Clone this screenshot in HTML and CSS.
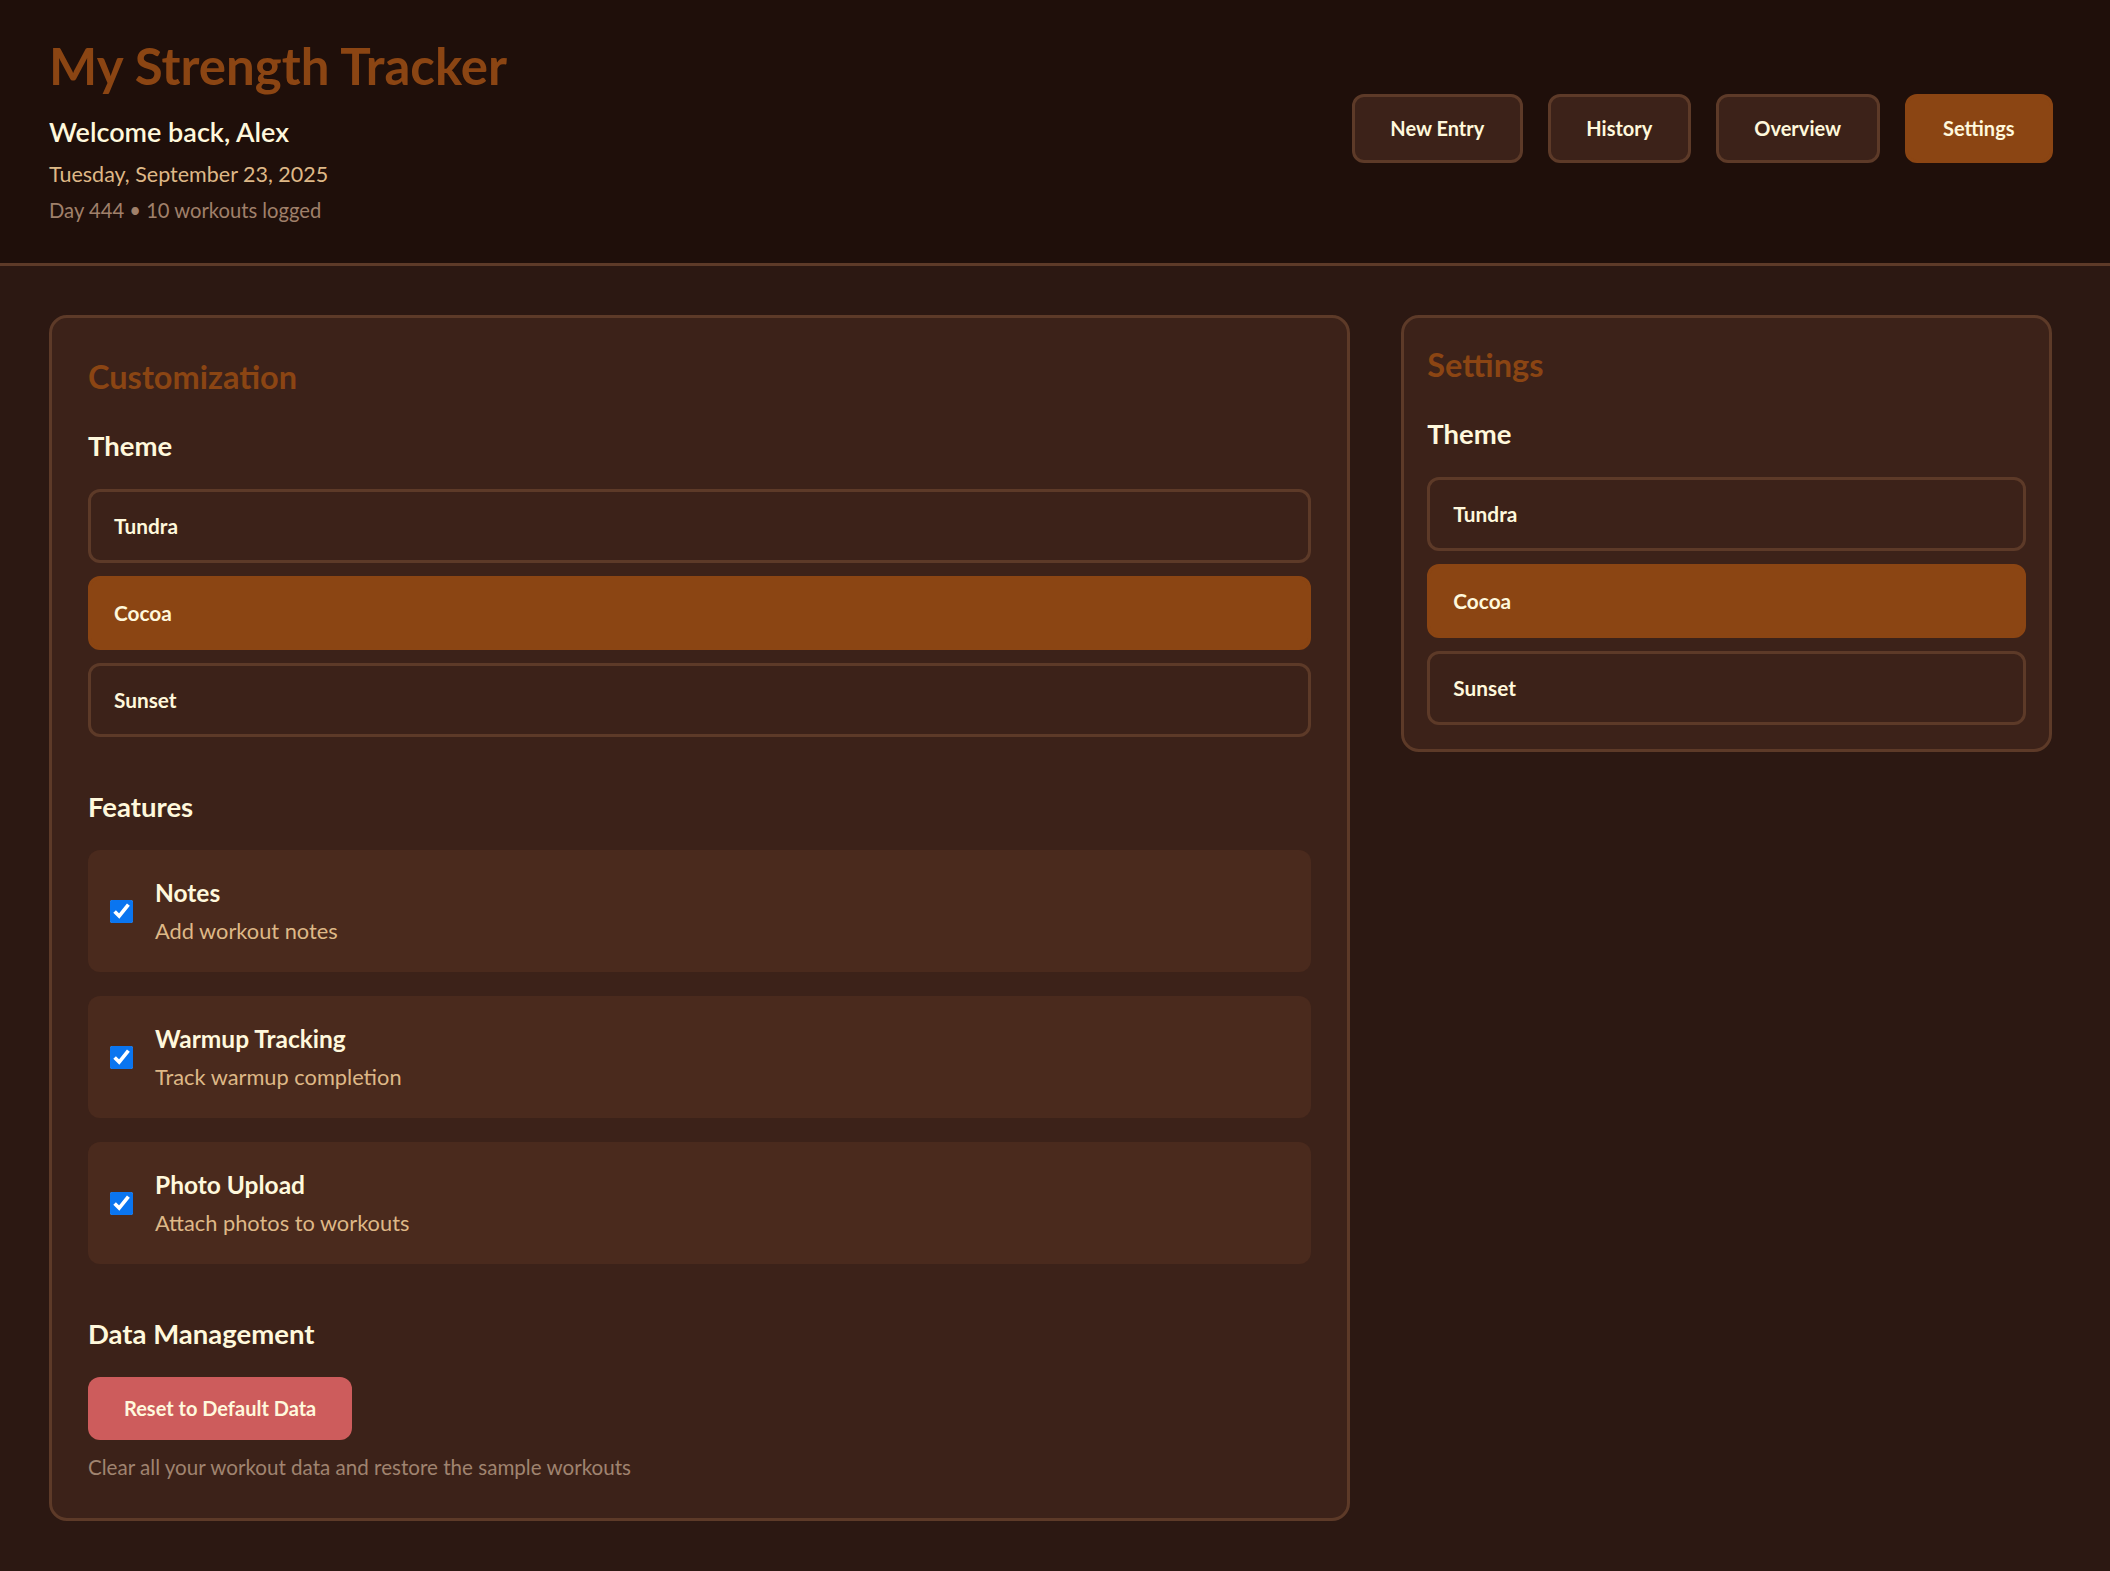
FILE: index.html
```html
<!DOCTYPE html>
<html lang="en">
<head>
<meta charset="utf-8">
<title>My Strength Tracker</title>
<link rel="stylesheet" href="styles.css">
</head>
<body>
<header class="app-header">
  <div class="brand">
    <h1 class="title">My Strength Tracker</h1>
    <p class="welcome">Welcome back, Alex</p>
    <p class="date">Tuesday, September 23, 2025</p>
    <p class="stats">Day 444 • 10 workouts logged</p>
  </div>
  <nav class="nav">
    <button class="nav-btn">New Entry</button>
    <button class="nav-btn">History</button>
    <button class="nav-btn">Overview</button>
    <button class="nav-btn active">Settings</button>
  </nav>
</header>

<main class="layout">
  <section class="card card-main">
    <h2 class="card-title">Customization</h2>

    <div class="section">
      <h3 class="section-title">Theme</h3>
      <div class="theme-list">
        <button class="theme-option">Tundra</button>
        <button class="theme-option active">Cocoa</button>
        <button class="theme-option">Sunset</button>
      </div>
    </div>

    <div class="section">
      <h3 class="section-title">Features</h3>
      <div class="feature-list">
        <label class="feature">
          <input class="feature-check" type="checkbox" checked>
          <span class="feature-text">
            <span class="feature-name">Notes</span>
            <span class="feature-desc">Add workout notes</span>
          </span>
        </label>
        <label class="feature">
          <input class="feature-check" type="checkbox" checked>
          <span class="feature-text">
            <span class="feature-name">Warmup Tracking</span>
            <span class="feature-desc">Track warmup completion</span>
          </span>
        </label>
        <label class="feature">
          <input class="feature-check" type="checkbox" checked>
          <span class="feature-text">
            <span class="feature-name">Photo Upload</span>
            <span class="feature-desc">Attach photos to workouts</span>
          </span>
        </label>
      </div>
    </div>

    <div class="section">
      <h3 class="section-title">Data Management</h3>
      <button class="reset-btn">Reset to Default Data</button>
      <p class="reset-desc">Clear all your workout data and restore the sample workouts</p>
    </div>
  </section>

  <aside class="card card-side">
    <h2 class="card-title">Settings</h2>
    <div class="section">
      <h3 class="section-title">Theme</h3>
      <div class="theme-list">
        <button class="theme-option">Tundra</button>
        <button class="theme-option active">Cocoa</button>
        <button class="theme-option">Sunset</button>
      </div>
    </div>
  </aside>
</main>
</body>
</html>
```

FILE: styles.css
```css
* {
  box-sizing: border-box;
}

html, body {
  margin: 0;
  padding: 0;
}

body {
  background: #2c1812;
  color: #fff8dc;
  font-family: Lato, "Open Sans", "Noto Sans", sans-serif;
  min-height: 100vh;
}

button {
  font-family: inherit;
  cursor: pointer;
}

/* Header */
.app-header {
  display: flex;
  justify-content: space-between;
  align-items: center;
  background: #1f0f0a;
  padding: 36px 57px 39px 49px;
  border-bottom: 3px solid #5d3a28;
}

.title {
  margin: 0;
  font-size: 51px;
  line-height: 59px;
  font-weight: 700;
  color: #8b4513;
}

.welcome {
  margin: 20px 0 0;
  font-size: 27px;
  line-height: 33px;
  font-weight: 600;
  color: #fff8dc;
}

.date {
  margin: 12px 0 0;
  font-size: 21.5px;
  line-height: 28px;
  color: #deb887;
}

.stats {
  margin: 9px 0 0;
  font-size: 20.2px;
  line-height: 27px;
  color: #a0806a;
}

.nav {
  display: flex;
  gap: 25px;
  margin-bottom: 4px;
}

.nav-btn {
  padding: 18px 35.5px;
  font-size: 20px;
  line-height: 27px;
  font-weight: 700;
  color: #fff8dc;
  background: #3c2219;
  border: 3px solid #5d3a28;
  border-radius: 12px;
}

.nav-btn.active {
  background: #8b4513;
  border-color: #8b4513;
}

/* Layout */
.layout {
  display: grid;
  grid-template-columns: 2fr 1fr;
  gap: 51px;
  align-items: start;
  padding: 49px 58px 49px 49px;
}

.card {
  background: #3c2219;
  border: 3px solid #5d3a28;
  border-radius: 18px;
}

.card-main {
  padding: 36px 36px 37px;
}

.card-side {
  padding: 24px 23px;
}

.card-title {
  margin: 0 0 28px;
  font-size: 32.5px;
  line-height: 46px;
  font-weight: 700;
  color: #8b4513;
}

.section + .section {
  margin-top: 52px;
}

.section-title {
  margin: 0 0 26px;
  font-size: 27.5px;
  line-height: 35px;
  font-weight: 700;
  color: #fff8dc;
}

/* Theme options */
.theme-list {
  display: flex;
  flex-direction: column;
  gap: 13px;
}

.theme-option {
  display: block;
  width: 100%;
  text-align: left;
  padding: 21px 23px;
  font-size: 20.8px;
  line-height: 26px;
  font-weight: 700;
  color: #fff8dc;
  background: #3c2219;
  border: 3px solid #5d3a28;
  border-radius: 12px;
}

.theme-option.active {
  background: #8b4513;
  border-color: #8b4513;
}

/* Features */
.feature-list {
  display: flex;
  flex-direction: column;
  gap: 24px;
}

.feature {
  display: flex;
  align-items: center;
  gap: 22px;
  padding: 27px 22px;
  background: #4a2a1d;
  border-radius: 12px;
  cursor: pointer;
}

.feature-check {
  flex: none;
  width: 23px;
  height: 23px;
  margin: 0;
  accent-color: #0a75f0;
}

.feature-text {
  display: block;
}

.feature-name {
  display: block;
  margin-bottom: 9px;
  font-size: 24.5px;
  line-height: 31px;
  font-weight: 700;
  color: #fff8dc;
}

.feature-desc {
  display: block;
  font-size: 21.8px;
  line-height: 28px;
  color: #deb887;
}

/* Data management */
.reset-btn {
  padding: 18px 36px;
  font-size: 20px;
  line-height: 27px;
  font-weight: 700;
  color: #fff8dc;
  background: #cd5c5c;
  border: none;
  border-radius: 12px;
}

.reset-desc {
  margin: 14px 0 0;
  font-size: 20.6px;
  line-height: 27px;
  color: #a08470;
}
```
